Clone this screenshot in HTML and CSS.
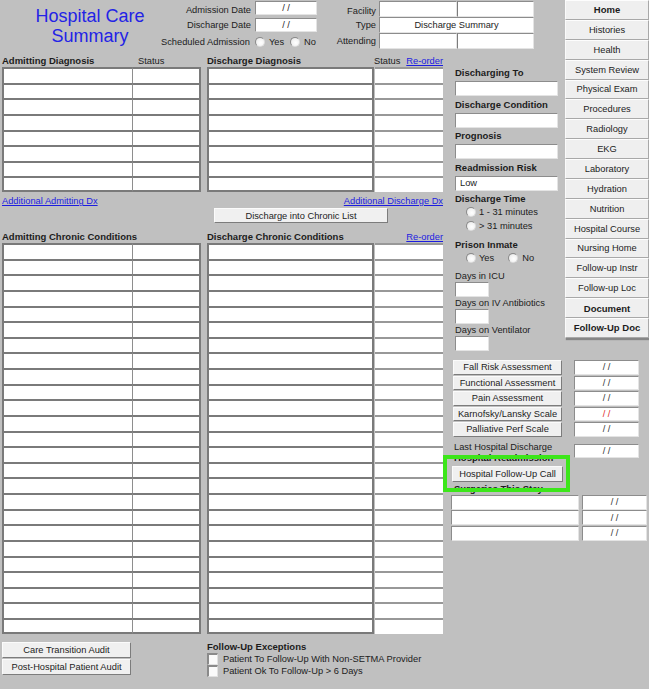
FILE: index.html
```html
<!DOCTYPE html>
<html>
<head>
<meta charset="utf-8">
<title>Hospital Care Summary</title>
<link rel="stylesheet" href="styles.css">
</head>
<body>
<div class="page">
  <header class="head">
    <div class="title">Hospital Care<br>Summary</div>
    <div class="dates">
      <div class="drow first"><span class="dlab">Admission Date</span><span class="field date">/ /</span></div>
      <div class="drow"><span class="dlab">Discharge Date</span><span class="field date">/ /</span></div>
      <div class="srow">Scheduled Admission <span class="radio r1"></span>Yes<span class="radio r2"></span>No</div>
    </div>
    <div class="facil">
      <div class="frow first"><span class="flab">Facility</span><span class="field ff1"></span><span class="field ff2"></span></div>
      <div class="frow"><span class="flab">Type</span><span class="field ftype">Discharge Summary</span></div>
      <div class="frow"><span class="flab">Attending</span><span class="field ff1"></span><span class="field ff2"></span></div>
    </div>
  </header>

  <nav class="nav">
    <div class="nb b">Home</div>
    <div class="nb">Histories</div>
    <div class="nb">Health</div>
    <div class="nb">System Review</div>
    <div class="nb">Physical Exam</div>
    <div class="nb">Procedures</div>
    <div class="nb">Radiology</div>
    <div class="nb">EKG</div>
    <div class="nb">Laboratory</div>
    <div class="nb">Hydration</div>
    <div class="nb">Nutrition</div>
    <div class="nb">Hospital Course</div>
    <div class="nb">Nursing Home</div>
    <div class="nb">Follow-up Instr</div>
    <div class="nb">Follow-up Loc</div>
    <div class="nb b">Document</div>
    <div class="nb b">Follow-Up Doc</div>
  </nav>

  <section class="left">
    <div class="pair">
      <div class="col a">
        <div class="ch"><b class="hw-a">Admitting Diagnosis</b><span>Status</span></div>
        <div class="tbl a">
          <span class="c"></span><span class="c"></span><span class="c"></span><span class="c"></span>
          <span class="c"></span><span class="c"></span><span class="c"></span><span class="c"></span>
          <span class="c"></span><span class="c"></span><span class="c"></span><span class="c"></span>
          <span class="c"></span><span class="c"></span><span class="c"></span><span class="c"></span>
        </div>
      </div>
      <div class="col d">
        <div class="ch"><b class="hw-d">Discharge Diagnosis</b><span>Status</span><a class="lnk reord" href="#">Re-order</a></div>
        <div class="tbl d">
          <span class="c"></span><span class="c"></span><span class="c"></span><span class="c"></span>
          <span class="c"></span><span class="c"></span><span class="c"></span><span class="c"></span>
          <span class="c"></span><span class="c"></span><span class="c"></span><span class="c"></span>
          <span class="c"></span><span class="c"></span><span class="c"></span><span class="c"></span>
        </div>
      </div>
    </div>
    <div class="links"><a class="lnk" href="#">Additional Admitting Dx</a><a class="lnk" href="#">Additional Discharge Dx</a></div>
    <div class="btn chronic-btn">Discharge into Chronic List</div>

    <div class="pair chronic">
      <div class="col a">
        <div class="ch"><b>Admitting Chronic Conditions</b></div>
        <div class="tbl a">
          <span class="c"></span><span class="c"></span><span class="c"></span><span class="c"></span><span class="c"></span>
          <span class="c"></span><span class="c"></span><span class="c"></span><span class="c"></span><span class="c"></span>
          <span class="c"></span><span class="c"></span><span class="c"></span><span class="c"></span><span class="c"></span>
          <span class="c"></span><span class="c"></span><span class="c"></span><span class="c"></span><span class="c"></span>
          <span class="c"></span><span class="c"></span><span class="c"></span><span class="c"></span><span class="c"></span>
          <span class="c"></span><span class="c"></span><span class="c"></span><span class="c"></span><span class="c"></span>
          <span class="c"></span><span class="c"></span><span class="c"></span><span class="c"></span><span class="c"></span>
          <span class="c"></span><span class="c"></span><span class="c"></span><span class="c"></span><span class="c"></span>
          <span class="c"></span><span class="c"></span><span class="c"></span><span class="c"></span><span class="c"></span>
          <span class="c"></span><span class="c"></span><span class="c"></span><span class="c"></span><span class="c"></span>
        </div>
      </div>
      <div class="col d">
        <div class="ch"><b>Discharge Chronic Conditions</b><a class="lnk reord" href="#">Re-order</a></div>
        <div class="tbl d">
          <span class="c"></span><span class="c"></span><span class="c"></span><span class="c"></span><span class="c"></span>
          <span class="c"></span><span class="c"></span><span class="c"></span><span class="c"></span><span class="c"></span>
          <span class="c"></span><span class="c"></span><span class="c"></span><span class="c"></span><span class="c"></span>
          <span class="c"></span><span class="c"></span><span class="c"></span><span class="c"></span><span class="c"></span>
          <span class="c"></span><span class="c"></span><span class="c"></span><span class="c"></span><span class="c"></span>
          <span class="c"></span><span class="c"></span><span class="c"></span><span class="c"></span><span class="c"></span>
          <span class="c"></span><span class="c"></span><span class="c"></span><span class="c"></span><span class="c"></span>
          <span class="c"></span><span class="c"></span><span class="c"></span><span class="c"></span><span class="c"></span>
          <span class="c"></span><span class="c"></span><span class="c"></span><span class="c"></span><span class="c"></span>
          <span class="c"></span><span class="c"></span><span class="c"></span><span class="c"></span><span class="c"></span>
        </div>
      </div>
    </div>

    <div class="bottom">
      <div class="audits">
        <div class="btn">Care Transition Audit</div>
        <div class="btn">Post-Hospital Patient Audit</div>
      </div>
      <div class="fue">
        <div class="lab b">Follow-Up Exceptions</div>
        <div class="chk-row"><span class="check"></span>Patient To Follow-Up With Non-SETMA Provider</div>
        <div class="chk-row"><span class="check"></span>Patient Ok To Follow-Up &gt; 6 Days</div>
      </div>
    </div>
  </section>

  <section class="side-top">
    <div class="lab b">Discharging To</div>
    <div class="field inp"></div>
    <div class="lab b">Discharge Condition</div>
    <div class="field inp"></div>
    <div class="lab b">Prognosis</div>
    <div class="field inp"></div>
    <div class="lab b">Readmission Risk</div>
    <div class="field inp txt">Low</div>
    <div class="lab b">Discharge Time</div>
    <div class="rad"><span class="radio"></span>1 - 31 minutes</div>
    <div class="rad"><span class="radio"></span>&gt; 31 minutes</div>
    <div class="lab b prison">Prison Inmate</div>
    <div class="rad"><span class="radio"></span>Yes<span class="radio gap"></span>No</div>
    <div class="lab days">Days in ICU</div>
    <div class="field sm"></div>
    <div class="lab">Days on IV Antibiotics</div>
    <div class="field sm"></div>
    <div class="lab">Days on Ventilator</div>
    <div class="field sm"></div>
  </section>

  <section class="side-bot">
    <div class="arow"><div class="btn abtn">Fall Risk Assessment</div><div class="field adt">/ /</div></div>
    <div class="arow"><div class="btn abtn">Functional Assessment</div><div class="field adt">/ /</div></div>
    <div class="arow"><div class="btn abtn">Pain Assessment</div><div class="field adt">/ /</div></div>
    <div class="arow"><div class="btn abtn">Karnofsky/Lansky Scale</div><div class="field adt red">/ /</div></div>
    <div class="arow"><div class="btn abtn">Palliative Perf Scale</div><div class="field adt">/ /</div></div>

    <div class="lhd">
      <div class="lhd-l">
        <div class="lab pl">Last Hospital Discharge</div>
        <div class="lab b pl hid">Hospital Readmission</div>
        <div class="hlwrap">
          <div class="btn fu">Hospital Follow-Up Call</div>
          <span class="hl"></span>
        </div>
        <div class="lab b pl surg">Surgeries This Stay</div>
      </div>
      <div class="field adt lhd-dt">/ /</div>
    </div>

    <div class="srows">
      <div class="sr"><span class="field w1"></span><span class="field w2">/ /</span></div>
      <div class="sr"><span class="field w1"></span><span class="field w2">/ /</span></div>
      <div class="sr"><span class="field w1"></span><span class="field w2">/ /</span></div>
    </div>
  </section>
</div>
</body>
</html>
```

FILE: styles.css
```css
* { box-sizing: border-box; }
html, body { margin: 0; padding: 0; }
body {
  background: #c0c0c0;
  font-family: "Liberation Sans", Arial, sans-serif;
  font-size: 9.3px;
  color: #1c1c1c;
  width: 649px;
  height: 689px;
  overflow: hidden;
}
.page {
  display: grid;
  grid-template-columns: 446px 119px 84px;
  grid-template-rows: 55px 297px auto;
}

/* generic controls */
.field {
  background: #fff;
  border: 1px solid;
  border-color: #8c8c8c #e4e4e4 #e4e4e4 #8c8c8c;
  display: flex;
  align-items: center;
  justify-content: center;
  white-space: nowrap;
}
.btn {
  background: #f0f0f0;
  border: 1px solid;
  border-color: #fbfbfb #7c7c7c #7c7c7c #fbfbfb;
  display: flex;
  align-items: center;
  justify-content: center;
  white-space: nowrap;
}
.radio {
  display: inline-block;
  width: 10px;
  height: 10px;
  border-radius: 50%;
  border: 1px solid;
  border-color: #8a8a8a #dcdcdc #dcdcdc #8a8a8a;
  background: radial-gradient(circle at 60% 60%, #ffffff 0%, #f2f2f2 55%, #d6d6d6 100%);
  flex: none;
}
.check {
  display: inline-block;
  width: 11px;
  height: 12px;
  background: #fafafa;
  border: 1px solid;
  border-width: 2px 1px 1px 2px;
  border-color: #8a8a8a #e0e0e0 #e0e0e0 #8a8a8a;
  margin-right: 5px;
  flex: none;
}
.lnk { color: #1c1ce0; text-decoration: underline; }
.lab { height: 12px; line-height: 12px; white-space: nowrap; }
.lab.b { font-weight: bold; font-size: 9.5px; }

/* header */
.head { grid-column: 1 / 3; grid-row: 1; display: flex; }
.title {
  width: 160px;
  padding: 7px 0 0 20px;
  text-align: center;
  font-size: 18px;
  line-height: 19.5px;
  color: #2323e6;
}
.dates { width: 160px; display: flex; flex-direction: column; }
.drow { display: flex; align-items: center; height: 14px; margin-top: 3px; }
.drow.first { margin-top: 1px; }
.dlab { width: 91px; text-align: right; margin-right: 4px; }
.drow.first .dlab { margin-top: 3px; }
.date { width: 62px; height: 14px; }
.srow { display: flex; align-items: center; height: 14px; margin-top: 3px; padding-left: 1px; white-space: nowrap; }
.srow .r1 { margin: 0 4px 0 5px; }
.srow .r2 { margin: 0 4px 0 6px; }
.facil { display: flex; flex-direction: column; padding-top: 1px; }
.frow { display: flex; height: 16px; }
.flab { width: 56px; text-align: right; margin-right: 3px; align-self: center; }
.frow.first .flab { margin-top: 3px; }
.ff1 { width: 78px; }
.ff2 { width: 77px; border-left-color: #7c7c7c; }
.ftype { width: 155px; }

/* nav */
.nav {
  grid-column: 3;
  grid-row: 1 / 3;
  align-self: start;
  display: flex;
  flex-direction: column;
  box-shadow: 1px 2px 1px rgba(0, 0, 0, 0.3);
}
.nb {
  height: 19.88px;
  display: flex;
  align-items: center;
  justify-content: center;
  background: #efefef;
  border-top: 1px solid #fdfdfd;
  border-bottom: 1px solid #a8a8a8;
  border-left: 1px solid #fafafa;
  border-right: 1px solid #a8a8a8;
  white-space: nowrap;
}
.nb.b { font-weight: bold; font-size: 9.5px; }

/* left area */
.left { grid-column: 1; grid-row: 2 / 4; padding-left: 2px; }
.pair { display: flex; gap: 6px; }
.col.a { width: 199px; }
.col.d { width: 236px; }
.ch { display: flex; height: 12px; line-height: 12px; white-space: nowrap; }
.ch b { font-size: 9.5px; }
.hw-a { width: 136px; }
.hw-d { width: 167px; }
.reord { margin-left: auto; }
.tbl { display: grid; grid-auto-rows: 15.625px; }
.tbl .c { background: #fff; }
.tbl.a {
  grid-template-columns: 128px 67px;
  border-left: 2px solid #7a7a7a;
  border-right: 2px solid #7a7a7a;
}
.tbl.a .c { border-top: 2px solid #7a7a7a; }
.tbl.a .c:nth-child(even) { border-left: 1px solid #8e8e8e; }
.tbl.a .c:nth-last-child(-n+2) { border-bottom: 2px solid #7a7a7a; }
.tbl.d { grid-template-columns: 167px 69px; }
.tbl.d .c:nth-child(odd) { border: 2px solid #7a7a7a; border-bottom: 0; }
.tbl.d .c:nth-child(odd):nth-last-child(2) { border-bottom: 2px solid #7a7a7a; }
.tbl.d .c:nth-child(even) { border-top: 2px solid #989898; margin-left: 1px; }
.links { display: flex; justify-content: space-between; width: 441px; height: 12px; line-height: 12px; margin-top: 3px; }
.chronic-btn { width: 174px; height: 15px; margin: 1px 0 0 212px; }
.pair.chronic { margin-top: 8px; }
.bottom { display: flex; margin-top: 8px; }
.audits { width: 129px; display: flex; flex-direction: column; gap: 1px; }
.audits .btn { height: 16px; }
.fue { margin-left: 76px; margin-top: -1px; }
.chk-row { display: flex; align-items: center; height: 12px; white-space: nowrap; }

/* side top */
.side-top { grid-column: 2; grid-row: 2; padding: 12px 0 0 9px; }
.inp { width: 103px; height: 15px; margin: 2px 0 2.5px; }
.inp.txt { justify-content: flex-start; padding-left: 4px; }
.rad { display: flex; align-items: center; height: 14px; padding-left: 11px; white-space: nowrap; }
.rad .radio { margin-right: 3px; }
.rad .radio.gap { margin-left: 14px; margin-right: 4px; }
.prison { margin-top: 6px; }
.days { margin-top: 5px; }
.sm { width: 34px; height: 15px; }

/* side bottom */
.side-bot { grid-column: 2 / 4; grid-row: 3; padding-top: 8px; }
.arow { display: flex; height: 14.5px; margin-bottom: 1px; }
.abtn { margin-left: 7px; width: 109px; }
.adt { margin-left: 12px; width: 65px; color: #333; }
.adt.red { color: #e02828; }
.lhd { display: flex; margin-top: 4px; }
.lhd-l { width: 128px; }
.pl { padding-left: 8px; }
.hid { margin-top: -1px; margin-bottom: 2px; }
.lhd-dt { margin-left: 0; margin-top: 3.5px; height: 14px; }
.hlwrap { position: relative; width: 111px; margin: 0 0 0 6px; }
.fu { height: 16px; }
.hl {
  position: absolute;
  left: -9px;
  top: -11px;
  right: -7px;
  bottom: -10px;
  border: 4px solid #3ce61a;
}
.surg { margin-top: 1px; }
.srows { display: flex; flex-direction: column; gap: 0.5px; }
.sr { display: flex; height: 15px; padding-left: 5px; gap: 3px; }
.sr .w1 { width: 128px; }
.sr .w2 { width: 65px; color: #333; }
```
